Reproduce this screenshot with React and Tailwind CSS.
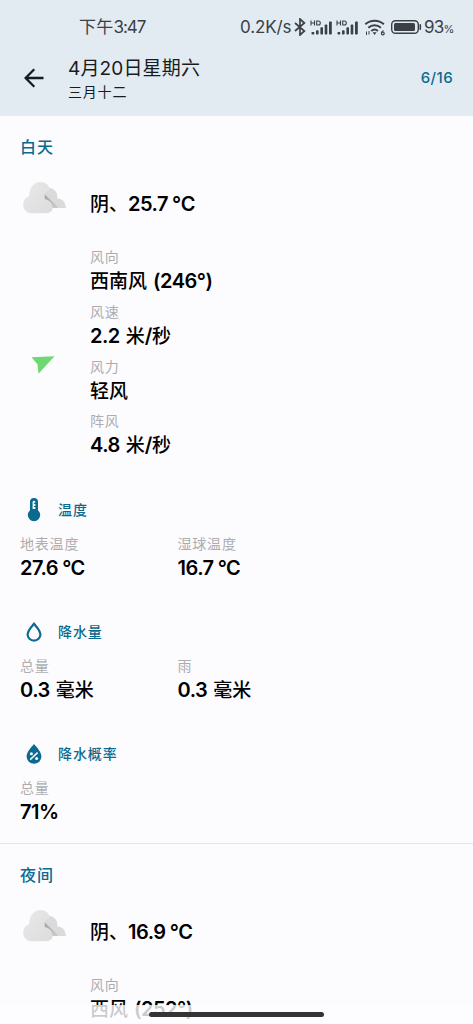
import clsx from "clsx";

const dayDetails = [
  { label: "风向", value: "西南风 (246°)" },
  { label: "风速", value: "2.2 米/秒" },
  { label: "风力", value: "轻风" },
  { label: "阵风", value: "4.8 米/秒" },
];

const dayGroups = [
  {
    title: "温度",
    icon: ThermometerIcon,
    items: [
      { label: "地表温度", value: "27.6 °C" },
      { label: "湿球温度", value: "16.7 °C" },
    ],
  },
  {
    title: "降水量",
    icon: DropIcon,
    items: [
      { label: "总量", value: "0.3 毫米" },
      { label: "雨", value: "0.3 毫米" },
    ],
  },
  {
    title: "降水概率",
    icon: DropPercentIcon,
    items: [{ label: "总量", value: "71%" }],
  },
];

function ThermometerIcon() {
  return (
    <svg width="14" height="26" viewBox="0 0 14 26">
      <path d="M7 1a4 4 0 0 0-4 4v8.2a6.2 6.2 0 1 0 8 0V5a4 4 0 0 0-4-4z" fill="#0b6a8d" />
      <path d="M5.6 12V5.2a1.4 1.4 0 0 1 2.8 0v.5H7v1.2h1.4v2H7v1.2h1.4V12z" fill="#fcfcff" />
    </svg>
  );
}

function DropIcon() {
  return (
    <svg width="16" height="20" viewBox="0 0 16 20">
      <path
        d="M8 1.8C5.3 5 1.6 8.8 1.6 12.4a6.4 6.2 0 0 0 12.8 0C14.4 8.8 10.7 5 8 1.8z"
        fill="none"
        stroke="#0b6a8d"
        strokeWidth="2.2"
      />
    </svg>
  );
}

function DropPercentIcon() {
  return (
    <svg width="16" height="20" viewBox="0 0 16 20">
      <path d="M8 0C5 3.6.6 8 .6 12.5a7.4 7.3 0 0 0 14.8 0C15.4 8 11 3.6 8 0z" fill="#0b6a8d" />
      <path d="M4.2 15.6l7.4-7" stroke="#fcfcff" strokeWidth="1.5" />
      <circle cx="5.4" cy="9.7" r="1.5" fill="#fcfcff" />
      <circle cx="10.6" cy="14.5" r="1.5" fill="#fcfcff" />
    </svg>
  );
}

function CloudIcon() {
  return (
    <svg width="46" height="34" viewBox="0 0 46 34">
      <defs>
        <linearGradient id="front" x1="0" y1="0" x2="1" y2="1">
          <stop offset="0" stopColor="#e9e9e9" />
          <stop offset="1" stopColor="#dcdcdc" />
        </linearGradient>
        <linearGradient id="shade" x1="0" y1="0" x2="1" y2="1">
          <stop offset="0" stopColor="#a0a0a0" />
          <stop offset="1" stopColor="#d0d0d0" />
        </linearGradient>
      </defs>
      <path d="M20 7h6a9 9 0 0 1 10.300 10.500c4.500-.4 8.200 3.500 8.700 9.500H20z" fill="#dadada" />
      <path d="M23.500 13.200L38 27H24z" fill="url(#shade)" />
      <path
        d="M10 32.200a8 8 0 0 1-7.800-8.500 9 9 0 0 1 6-8.500C8 7 13 1 19.500 1c5 0 8.700 3.500 9.300 7.500l-5.300 4.500v5c4.500.8 8.200 4.200 8.200 8.500 0 3.700-3 5.700-6.500 5.700z"
        fill="url(#front)"
      />
    </svg>
  );
}

function WindArrow() {
  return (
    <svg width="24" height="18" viewBox="0 0 24 18">
      <path d="M.5 1.200L23.500.3 7.500 17.700 6.600 8.400z" fill="#70d873" />
    </svg>
  );
}

function BluetoothIcon() {
  return (
    <svg width="12" height="18" viewBox="0 0 12 18">
      <path d="M1 5l9.400 8L6 17V1l4.400 4L1 13" fill="none" stroke="#3a4046" strokeWidth="1.700" />
    </svg>
  );
}

function SignalIcon() {
  return (
    <svg width="23" height="17" viewBox="0 0 23 17" fill="#3a4046">
      <path d="M1 1.500v5M4.500 1.500v5M1 4h3.500" stroke="#3a4046" strokeWidth="1.100" />
      <path d="M6.700 2h1.600a1.900 1.900 0 0 1 0 4H6.700z" fill="none" stroke="#3a4046" strokeWidth="1.100" />
      <rect x="1.500" y="13" width="2.800" height="2.500" rx=".8" />
      <rect x="6" y="11.300" width="2.600" height="4.200" rx=".8" />
      <rect x="10.400" y="8.300" width="2.600" height="7.200" rx=".8" />
      <rect x="14.700" y="5.500" width="2.600" height="10" rx=".8" />
      <rect x="19" y="2.500" width="2.800" height="13" rx=".8" />
    </svg>
  );
}

function WifiIcon() {
  return (
    <svg width="22" height="17" viewBox="0 0 22 17">
      <g fill="none" stroke="#3a4046" strokeWidth="2">
        <path d="M1.300 5.200a14 14 0 0 1 18.600 0" />
        <path d="M4.300 8.700a9.500 9.500 0 0 1 12.600 0" />
        <path d="M7.300 12a5 5 0 0 1 6.600 0" />
      </g>
      <path d="M8.600 13.300h4l-2 2.700z" fill="#3a4046" />
      <path d="M2.500 12.500v3.500M5 12v3.500" stroke="#3a4046" strokeWidth="1" />
      <path d="M19.500 11.500c-1.300.6-2 1.700-2 3" fill="none" stroke="#3a4046" strokeWidth="1.200" />
      <circle cx="18.800" cy="14.400" r="1.400" fill="none" stroke="#3a4046" strokeWidth="1.200" />
    </svg>
  );
}

function BatteryIcon() {
  return (
    <svg width="31" height="14" viewBox="0 0 31 14">
      <rect x=".7" y=".7" width="26.600" height="12.600" rx="3.800" fill="none" stroke="#3a4046" strokeWidth="1.400" />
      <rect x="3" y="3" width="21" height="8" rx="1.500" fill="#3a4046" />
      <path d="M29.300 4.800v4.400" stroke="#3a4046" strokeWidth="1.600" strokeLinecap="round" />
    </svg>
  );
}

function StatusBar() {
  return (
    <div className="flex h-[54px] items-center pl-[79px] text-[17px] text-[#3a4046]">
      <span className="w-[161px] pt-px tracking-[-1px]">
        <span className="tracking-[0.2px]">下午</span>3:47
      </span>
      <span className="w-[54px] pt-px tracking-[-0.1px]">0.2K/s</span>
      <BluetoothIcon />
      <div className="ml-[4px] flex w-[54px] gap-[3px]">
        <SignalIcon />
        <SignalIcon />
      </div>
      <WifiIcon />
      <div className="ml-[5px] w-[33px]">
        <BatteryIcon />
      </div>
      <span className="pt-px tracking-[-0.8px]">
        93<span className="text-[11px]">%</span>
      </span>
    </div>
  );
}

function Header() {
  return (
    <header className="h-[116px] bg-[#e2eaf2]">
      <StatusBar />
      <div className="flex items-start pr-5 pl-6">
        <svg className="mt-[14px]" width="20" height="20" viewBox="0 0 20 20">
          <path d="M19.500 10H2M10.300 1.300L1.600 10l8.700 8.700" fill="none" stroke="#171c20" strokeWidth="2.300" />
        </svg>
        <div className="ml-6 flex-1 text-[#171c20]">
          <h1 className="pt-px text-[19px] leading-[27px] tracking-[0.15px]">4月20日星期六</h1>
          <p className="text-sm leading-[20px] tracking-[0.8px]">三月十二</p>
        </div>
        <span className="mt-[13px] text-[15px] leading-[22px] font-medium tracking-[0.4px] text-[#0b6a8d]">
          6/16
        </span>
      </div>
    </header>
  );
}

// Latin runs are set a little larger and heavier than the Chinese characters
function MixedText({ text }) {
  return text.split(/([\u3000-\u9fff]+)/).map((part, i) =>
    i % 2 ? (
      <span key={i}>{part}</span>
    ) : (
      <span
        key={i}
        className={clsx(
          "text-[20px] font-semibold tracking-[-0.5px]",
          part.includes("C") ? "[word-spacing:-0.5px]" : "[word-spacing:1.5px]"
        )}
      >
        {part}
      </span>
    )
  );
}

function Detail({ label, value, className }) {
  return (
    <div className={className}>
      <div className="text-sm leading-[20px] tracking-[0.8px] text-[#adadb0]">{label}</div>
      <div className="h-[26px] pt-px text-[19px] leading-[26px] font-medium whitespace-pre text-black">
        <MixedText text={value} />
      </div>
    </div>
  );
}

function Group({ title, icon: Icon, items }) {
  return (
    <div className="h-[122px] px-5">
      <div className="flex h-[44px] items-center">
        <div className="flex w-[28px] justify-center">
          <Icon />
        </div>
        <h3 className="ml-[10px] text-sm font-medium tracking-[0.9px] text-[#0b6a8d]">{title}</h3>
      </div>
      <div className="mt-[2px] flex">
        {items.map((item) => (
          <Detail key={item.label} {...item} className="-mt-px w-[157.5px] pt-px" />
        ))}
      </div>
    </div>
  );
}

function Period({ title, weather, details, arrow }) {
  return (
    <>
      <h2 className="px-5 pt-[19px] text-[16px] leading-[24px] font-medium tracking-[0.9px] text-[#0b6a8d]">
        {title}
      </h2>
      <div className="mt-[21px] flex h-[36px] pl-[21px]">
        <div className="w-[69px] pt-[1px]">
          <CloudIcon />
        </div>
        <div className="pt-[11px] text-[19px] leading-[26px] font-medium">
          <MixedText text={weather} />
        </div>
      </div>
      <div className={clsx("mt-[31px] flex", arrow && "h-[241px]")}>
        <div className="w-[90px] pt-[109px] pl-[31px]">{arrow && <WindArrow />}</div>
        <div>
          {details.map((item) => (
            <Detail key={item.label} {...item} className="h-[54.8px]" />
          ))}
        </div>
      </div>
    </>
  );
}

export default function App() {
  return (
    <div className="relative h-[1024px] w-[473px] overflow-hidden bg-[#fcfcff] font-['Inter','Noto_Sans_CJK_SC',sans-serif]">
      <Header />
      <Period title="白天" weather="阴、25.7 °C" details={dayDetails} arrow />
      {dayGroups.map((group) => (
        <Group key={group.title} {...group} />
      ))}
      <div className="-mt-[11px] border-t border-[#e4e5e8]" />
      <Period title="夜间" weather="阴、16.9 °C" details={[{ label: "风向", value: "西风 (252°)" }]} />

      {/* gesture bar */}
      <div className="absolute inset-x-0 bottom-0 h-[19px] bg-[#fdfdff]/80">
        <div className="mx-auto mt-[7px] h-[5px] w-[175px] rounded-full bg-[#343434]" />
      </div>
    </div>
  );
}
